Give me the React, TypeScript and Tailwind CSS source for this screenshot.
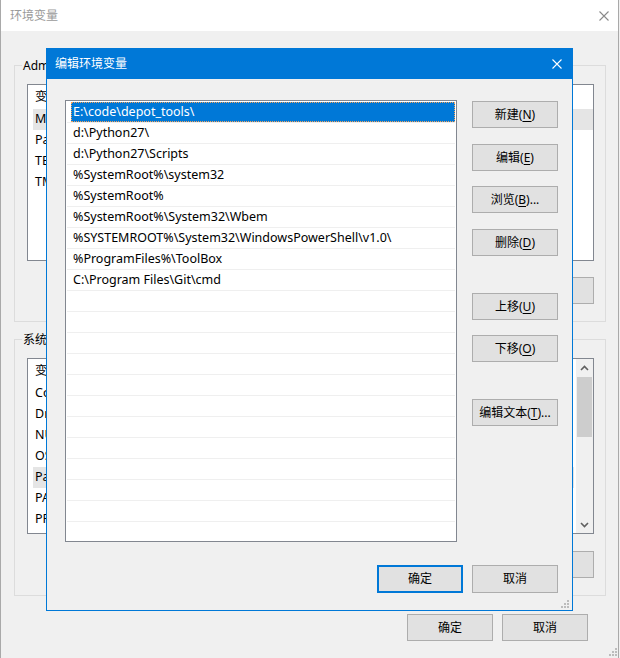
import React from 'react';

const paths = [
  'E:\\code\\depot_tools\\',
  'd:\\Python27\\',
  'd:\\Python27\\Scripts',
  '%SystemRoot%\\system32',
  '%SystemRoot%',
  '%SystemRoot%\\System32\\Wbem',
  '%SYSTEMROOT%\\System32\\WindowsPowerShell\\v1.0\\',
  '%ProgramFiles%\\ToolBox',
  'C:\\Program Files\\Git\\cmd',
];

const userVars = ['MOZ_PLUGIN_PATH', 'Path', 'TEMP', 'TMP'];
const sysVars = ['ComSpec', 'DriverData', 'NUMBER_OF_PROCESSORS', 'OS', 'Path', 'PATHEXT', 'PROCESSOR_ARCHITECTURE'];

const Btn = ({ children, primary = false, className = '' }: { children: React.ReactNode; primary?: boolean; className?: string }) => (
  <div
    className={`flex items-center justify-center w-[86px] h-[27px] bg-[#e1e1e1] text-[12px] text-black shrink-0 ${
      primary ? 'border-2 border-[#0078d7]' : 'border border-[#adadad]'
    } ${className}`}
  >
    {children}
  </div>
);

const U = ({ children }: { children: React.ReactNode }) => (
  <span className="underline underline-offset-[2px]">{children}</span>
);

const CloseX = ({ color }: { color: string }) => (
  <svg width="10" height="10" viewBox="0 0 10 10">
    <path d="M0.5 0.5 L9.5 9.5 M9.5 0.5 L0.5 9.5" stroke={color} strokeWidth="1.1" fill="none" />
  </svg>
);

const Grip = () => (
  <svg width="8" height="8" viewBox="0 0 8 8">
    {[[6, 0], [3, 3], [6, 3], [0, 6], [3, 6], [6, 6]].map(([x, y], i) => (
      <rect key={i} x={x} y={y} width="2" height="2" fill="#bcbcbc" />
    ))}
  </svg>
);

const Chevron = ({ up }: { up?: boolean }) => (
  <svg width="9" height="6" viewBox="0 0 9 6">
    <path d={up ? 'M1 5 L4.5 1.5 L8 5' : 'M1 1 L4.5 4.5 L8 1'} stroke="#606060" strokeWidth="1.6" fill="none" />
  </svg>
);

// background variable list (mostly hidden behind the dialog)
const VarList = ({ rows, hl, scroll, h }: { rows: string[]; hl: number; scroll?: boolean; h: string }) => (
  <div className={`flex w-[567px] ${h} border border-[#828790] bg-white text-[12.5px]`}>
    <div className="flex-1 flex flex-col">
      <div className="h-[24px] flex items-center pl-[7px] shrink-0">
        <span className="w-[160px]">变量</span>
        <span>值</span>
      </div>
      {rows.map((r, i) => (
        <div key={r + i} className="h-[21px] flex items-stretch pl-[5px] shrink-0">
          <div className={`flex-1 flex items-center pl-[2px] ${i === hl ? 'bg-[#e5e5e5]' : ''}`}>{r}</div>
        </div>
      ))}
    </div>
    {scroll && (
      <div className="w-[17px] ml-[2px] bg-[#f0f0f0] flex flex-col items-center">
        <div className="h-[17px] flex items-center justify-center">
          <Chevron up />
        </div>
        <div className="w-[15px] h-[60px] bg-[#cdcdcd] mt-[1px]" />
        <div className="flex-1" />
        <div className="h-[17px] flex items-center justify-center">
          <Chevron />
        </div>
      </div>
    )}
  </div>
);

const App: React.FC = () => {
  return (
    <div className="relative w-[620px] h-[658px] overflow-hidden bg-[#f0f0f0] text-[12px] text-black font-['Noto_Sans','Noto_Sans_CJK_SC',sans-serif]">
      {/* background window */}
      <div className="relative w-[619px] h-[658px] border-l border-r border-[#a9a9a9] flex flex-col">
        <div className="h-[31px] bg-white flex items-center justify-between pl-[9px] pr-[9px] shrink-0">
          <span className="text-[#9a9a9a]">环境变量</span>
          <CloseX color="#8a8a8a" />
        </div>

        <div className="relative mt-[34px] ml-[13px] w-[592px] h-[257px] border border-[#dcdcdc] pt-[18px] pl-[12px]">
          <span className="absolute -top-[9px] left-[7px] px-[1px] bg-[#f0f0f0]">Administrator 的用户变量(U)</span>
          <VarList rows={userVars} hl={0} h="h-[177px]" />
          <div className="mt-[16px] w-[567px] flex justify-end gap-[8px]">
            <Btn>新建(N)...</Btn>
            <Btn>编辑(E)...</Btn>
            <Btn>删除(D)</Btn>
          </div>
        </div>

        <div className="relative mt-[17px] ml-[13px] w-[592px] h-[257px] border border-[#dcdcdc] pt-[18px] pl-[12px]">
          <span className="absolute -top-[9px] left-[7px] px-[1px] bg-[#f0f0f0]">系统变量(S)</span>
          <VarList rows={sysVars} hl={4} scroll h="h-[176px]" />
          <div className="mt-[17px] w-[567px] flex justify-end gap-[8px]">
            <Btn>新建(W)...</Btn>
            <Btn>编辑(I)...</Btn>
            <Btn>删除(L)</Btn>
          </div>
        </div>

        <div className="mt-[18px] flex justify-end gap-[9px] pr-[30px]">
          <Btn>确定</Btn>
          <Btn>取消</Btn>
        </div>

        <div className="absolute right-[1px] bottom-[2px]">
          <Grip />
        </div>
      </div>

      {/* edit dialog */}
      <div className="absolute left-[46px] top-[48px] w-[527px] h-[563px] border border-[#0078d7] bg-[#f0f0f0] flex flex-col">
        <div className="h-[30px] bg-[#0078d7] flex items-center justify-between pl-[8px] pr-[10px] shrink-0">
          <span className="text-white">编辑环境变量</span>
          <CloseX color="#ffffff" />
        </div>

        <div className="flex pt-[21px] pl-[18px]">
          <div className="w-[392px] h-[442px] border border-[#828790] bg-white p-[1px] overflow-hidden text-[12.5px]">
            {Array.from({ length: 22 }).map((_, i) => (
              <div key={i} className="h-[21px] border-b border-[#efefef] flex">
                <div
                  className={`flex-1 ml-[4px] pl-[2px] pt-[1px] flex items-center whitespace-nowrap ${
                    i === 0 ? 'bg-[#0078d7] text-white outline outline-1 outline-dotted outline-[#f5a35a] -outline-offset-1' : ''
                  }`}
                >
                  {paths[i] ?? ''}
                </div>
              </div>
            ))}
          </div>

          <div className="ml-[15px] flex flex-col">
            <Btn className="mt-[1px]">新建(<U>N</U>)</Btn>
            <Btn className="mt-[16px]">编辑(<U>E</U>)</Btn>
            <Btn className="mt-[15px]">浏览(<U>B</U>)...</Btn>
            <Btn className="mt-[16px]">删除(<U>D</U>)</Btn>
            <Btn className="mt-[37px]">上移(<U>U</U>)</Btn>
            <Btn className="mt-[15px]">下移(<U>O</U>)</Btn>
            <Btn className="mt-[37px]">编辑文本(<U>T</U>)...</Btn>
          </div>
        </div>

        <div className="mt-[23px] flex justify-end gap-[9px] pr-[14px]">
          <Btn primary className="h-[28px]">确定</Btn>
          <Btn className="h-[28px]">取消</Btn>
        </div>

        <div className="absolute right-[3px] bottom-[2px]">
          <Grip />
        </div>
      </div>
    </div>
  );
};

export default App;
